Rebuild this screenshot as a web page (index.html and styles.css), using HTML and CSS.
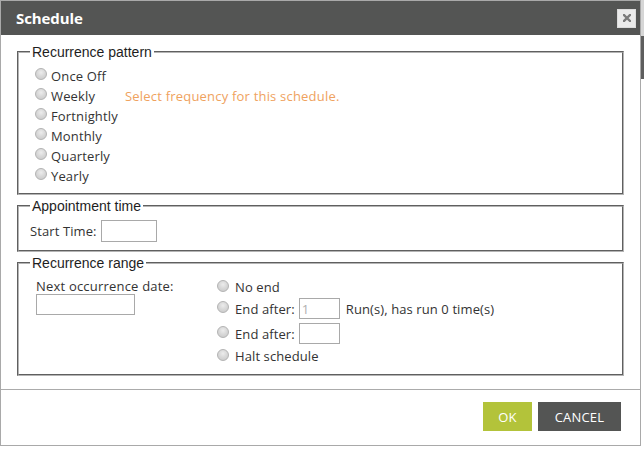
FILE: index.html
```html
<!DOCTYPE html>
<html lang="en">
<head>
<meta charset="utf-8">
<title>Schedule</title>
<link rel="stylesheet" href="styles.css">
</head>
<body>
<div class="page-bg">
  <span class="peek"></span>
  <span class="scroll-top"></span>
  <span class="scroll-thumb"></span>
</div>
<div class="dialog">
  <div class="titlebar">
    <span class="title">Schedule</span>
    <button class="close" type="button" aria-label="Close">
      <svg width="8" height="8" viewBox="0 0 8 8"><path d="M1 1L7 7M7 1L1 7" stroke="#7b7b7b" stroke-width="2.4" stroke-linecap="square"/></svg>
    </button>
  </div>
  <div class="content">
    <fieldset class="fs fs-pattern">
      <legend>Recurrence pattern</legend>
      <div class="pattern">
        <div class="options">
          <label class="opt"><input type="radio" name="freq">Once Off</label>
          <label class="opt"><input type="radio" name="freq">Weekly</label>
          <label class="opt"><input type="radio" name="freq">Fortnightly</label>
          <label class="opt"><input type="radio" name="freq">Monthly</label>
          <label class="opt"><input type="radio" name="freq">Quarterly</label>
          <label class="opt"><input type="radio" name="freq">Yearly</label>
        </div>
        <div class="hint">Select frequency for this schedule.</div>
      </div>
    </fieldset>
    <fieldset class="fs fs-time">
      <legend>Appointment time</legend>
      <div class="time-row">
        <label class="time-label">Start Time:</label>
        <input class="field field-time" type="text">
      </div>
    </fieldset>
    <fieldset class="fs fs-range">
      <legend>Recurrence range</legend>
      <div class="range">
        <div class="range-left">
          <label class="next-label">Next occurrence date:</label>
          <input class="field field-date" type="text">
        </div>
        <div class="range-right">
          <label class="ropt r-plain"><input type="radio" name="end"><span>No end</span></label>
          <label class="ropt r-input"><input type="radio" name="end"><span>End after:</span><input class="field field-small muted" type="text" value="1"><span class="runs">Run(s), has run 0 time(s)</span></label>
          <label class="ropt r-input"><input type="radio" name="end"><span>End after:</span><input class="field field-small" type="text"></label>
          <label class="ropt r-plain r-last"><input type="radio" name="end"><span>Halt schedule</span></label>
        </div>
      </div>
    </fieldset>
  </div>
  <div class="footer">
    <button class="btn btn-ok" type="button">OK</button>
    <button class="btn btn-cancel" type="button">CANCEL</button>
  </div>
</div>
</body>
</html>
```

FILE: styles.css
```css
* { box-sizing: border-box; }
html, body { margin: 0; padding: 0; background: #fff; }
body {
  position: relative;
  width: 644px;
  height: 451px;
  overflow: hidden;
  font-family: "Open Sans", "Liberation Sans", sans-serif;
  font-size: 13px;
  color: #333;
}

/* page behind the dialog */
.page-bg { position: absolute; inset: 0; }
.peek { position: absolute; left: 446px; top: 0; width: 10px; height: 1px; background: #b8b8b8; }
.scroll-top { position: absolute; left: 641px; top: 0; width: 3px; height: 36px; background: #d6d6d6; }
.scroll-thumb { position: absolute; left: 641px; top: 36px; width: 3px; height: 43px; background: #5e5e5e; }

.dialog {
  position: relative;
  width: 641px;
  height: 446px;
  border: 1px solid #a9a9a9;
  background: #fff;
  display: flex;
  flex-direction: column;
}

.titlebar {
  height: 34px;
  flex: none;
  background: #545554;
  display: flex;
  align-items: center;
  justify-content: space-between;
  padding: 0 4px 0 15px;
}
.title {
  color: #fff;
  font-weight: 700;
  font-size: 15px;
  letter-spacing: -0.1px;
}
.close {
  width: 19px;
  height: 19px;
  padding: 0;
  margin: 0;
  border: 1px solid #dcdcdc;
  background: #ebebeb;
  display: flex;
  align-items: center;
  justify-content: center;
}

.content {
  flex: 1;
  padding: 9px 16px 0 16px;
  display: flex;
  flex-direction: column;
  gap: 3px;
}

.fs {
  margin: 0;
  border: 2px groove #b4b4b4;
  padding: 0 11px;
  min-width: 0;
}
.fs legend {
  font-family: "Liberation Sans", Arial, sans-serif;
  font-size: 14px;
  line-height: 16px;
  color: #1e1e1e;
  padding: 0 2px;
}

/* radio */
input[type="radio"] {
  -webkit-appearance: none;
  appearance: none;
  flex: none;
  width: 12px;
  height: 12px;
  margin: 0;
  border-radius: 50%;
  border: 1px solid #b3b3b3;
  background: radial-gradient(circle at 50% 35%, #ececec 0, #d9d9d9 45%, #c6c6c6 100%);
}

/* recurrence pattern */
.fs-pattern { padding-top: 6px; padding-bottom: 7px; }
.pattern { display: flex; }
.options { width: 95px; display: flex; flex-direction: column; }
.opt {
  height: 20px;
  display: flex;
  align-items: center;
  letter-spacing: 0.15px;
}
.opt input { margin: -4px 4px 0 5px; }
.hint {
  margin-top: 20px;
  line-height: 20px;
  color: #efa25e;
  letter-spacing: 0.2px;
}

/* appointment time */
.fs-time { padding-top: 6px; padding-bottom: 8px; }
.time-row { display: flex; align-items: center; }
.time-label { letter-spacing: 0.1px; }
.field {
  border: 1px solid #a9a9a9;
  background: #fff;
  padding: 0 2px;
  margin: 0;
  font-family: "Open Sans", "Liberation Sans", sans-serif;
  font-size: 13px;
  color: #333;
  outline: none;
}
.field-time { width: 56px; height: 22px; margin-left: 4px; }

/* recurrence range */
.fs-range { padding-top: 7px; padding-bottom: 8px; }
.range { display: grid; grid-template-columns: 182px 1fr; }
.range-left { padding-left: 6px; display: flex; flex-direction: column; align-items: flex-start; }
.next-label { line-height: 17px; letter-spacing: 0.2px; }
.field-date { width: 99px; height: 21px; margin-top: -1px; }
.range-right { display: flex; flex-direction: column; }
.ropt { display: flex; align-items: center; letter-spacing: 0.1px; }
.ropt input[type="radio"] { margin: -3px 6px 0 5px; }
.r-plain { height: 18px; }
.r-input { height: 25px; }
.r-last { height: 20px; }
.field-small { width: 41px; height: 21px; margin-left: 4px; }
.muted { color: #b0b0b0; }
.runs { margin-left: 6px; }

/* footer */
.footer {
  flex: none;
  border-top: 1px solid #ababab;
  padding: 12px 19px 14px 0;
  display: flex;
  justify-content: flex-end;
  gap: 6px;
}
.btn {
  height: 29px;
  border: 0;
  margin: 0;
  padding: 0;
  color: #fff;
  font-family: "Open Sans", "Liberation Sans", sans-serif;
  font-size: 13px;
  letter-spacing: 0.2px;
}
.btn-ok { width: 49px; background: #b3c33a; }
.btn-cancel { width: 83px; background: #545554; }
```
